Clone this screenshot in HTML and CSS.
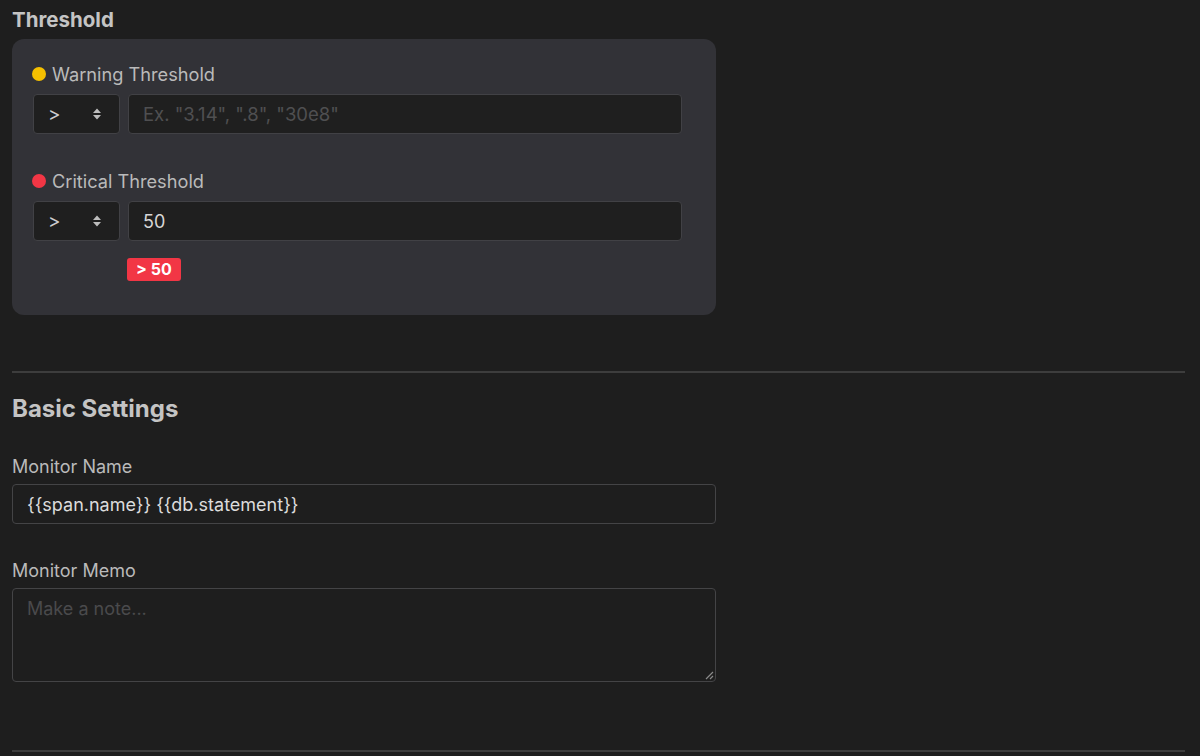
FILE: index.html
```html
<!DOCTYPE html>
<html>
<head>
<meta charset="utf-8">
<link rel="stylesheet" href="styles.css">
</head>
<body>
<div class="page">
  <h2 class="title">Threshold</h2>
  <div class="panel">
    <div class="label"><span class="dot dot-warn"></span>Warning Threshold</div>
    <div class="row">
      <div class="select"><span>&gt;</span>
        <svg width="10" height="14" viewBox="0 0 10 14"><path d="M5 1.5 L9 6 H1 Z M5 12.5 L9 8 H1 Z" fill="#bdbdbd"/></svg>
      </div>
      <div class="input placeholder">Ex. "3.14", ".8", "30e8"</div>
    </div>
    <div class="label label-crit"><span class="dot dot-crit"></span>Critical Threshold</div>
    <div class="row">
      <div class="select"><span>&gt;</span>
        <svg width="10" height="14" viewBox="0 0 10 14"><path d="M5 1.5 L9 6 H1 Z M5 12.5 L9 8 H1 Z" fill="#bdbdbd"/></svg>
      </div>
      <div class="input value">50</div>
    </div>
    <div class="badge-row"><span class="badge">&gt; 50</span></div>
  </div>
  <div class="divider div1"></div>
  <h2 class="section">Basic Settings</h2>
  <div class="field-label fl1">Monitor Name</div>
  <div class="text-input">{{span.name}} {{db.statement}}</div>
  <div class="field-label fl2">Monitor Memo</div>
  <div class="textarea">
    <span class="ph">Make a note...</span>
    <svg class="grip" width="10" height="10" viewBox="0 0 10 10"><path d="M9 2 L2 9 M9 6 L6 9" stroke="#8a8a8a" stroke-width="1.2"/></svg>
  </div>
  <div class="divider div2"></div>
</div>
</body>
</html>
```

FILE: styles.css
```css
* { box-sizing: border-box; }
html, body { margin: 0; padding: 0; background: #1e1e1e; }
body {
  font-family: Inter, "Noto Sans", "Liberation Sans", sans-serif;
  color: #bdbdbd;
  width: 1200px;
  height: 756px;
  overflow: hidden;
}
.page { padding: 8px 15px 0 12px; }
.title {
  margin: 0;
  font-size: 20.5px;
  line-height: 24px;
  font-weight: 700;
  color: #c4c4c4;
}
.panel {
  margin-top: 7px;
  width: 704px;
  background: #323237;
  border-radius: 12px;
  padding: 24px 34px 34px 20px;
}
.label {
  display: flex;
  align-items: center;
  font-size: 18.2px;
  line-height: 22px;
  color: #bababa;
}
.label-crit { margin-top: 36px; }
.dot {
  width: 14px;
  height: 14px;
  border-radius: 50%;
  margin-right: 6px;
  flex: none;
}
.dot-warn { background: #f5c000; }
.dot-crit { background: #f23645; }
.row {
  display: flex;
  gap: 8px;
  margin-top: 9px;
  padding-left: 1px;
}
.select {
  width: 87px;
  height: 40px;
  background: #1f1f1f;
  border: 1px solid #414145;
  border-radius: 4px;
  display: flex;
  align-items: center;
  justify-content: space-between;
  padding: 0 17px 0 14px;
  font-size: 19px;
  color: #cfcfcf;
}
.input {
  flex: 1;
  height: 40px;
  background: #1f1f1f;
  border: 1px solid #414145;
  border-radius: 4px;
  display: flex;
  align-items: center;
  padding: 0 14px;
  font-size: 18px;
}
.placeholder { color: #4f4f51; font-size: 18.5px; }
.value { color: #d6d6d6; }
.badge-row { margin-top: 17px; padding-left: 95px; }
.badge {
  display: inline-block;
  background: #f23645;
  color: #fff;
  font-weight: 700;
  font-size: 16px;
  line-height: 23px;
  height: 23px;
  padding: 0 9px;
  border-radius: 3px;
}
.divider { height: 2px; background: #3d3d3d; }
.div1 { margin-top: 56px; }
.section {
  margin: 22px 0 0;
  font-size: 24px;
  line-height: 28px;
  font-weight: 700;
  color: #c4c4c4;
}
.field-label {
  font-size: 18px;
  line-height: 22px;
  color: #bababa;
}
.fl1 { margin-top: 33px; }
.fl2 { margin-top: 36px; }
.text-input {
  margin-top: 6px;
  width: 704px;
  height: 40px;
  border: 1px solid #444446;
  border-radius: 4px;
  background: #1e1e1e;
  display: flex;
  align-items: center;
  padding: 0 14px;
  font-size: 18px;
  color: #dcdcdc;
}
.textarea {
  margin-top: 6px;
  width: 704px;
  height: 94px;
  border: 1px solid #444446;
  border-radius: 4px;
  background: #1e1e1e;
  padding: 9px 14px;
  font-size: 18px;
  line-height: 22px;
  position: relative;
}
.ph { color: #4a4a4c; }
.grip { position: absolute; right: 1px; bottom: 1px; }
.div2 { margin-top: 68px; }
```
